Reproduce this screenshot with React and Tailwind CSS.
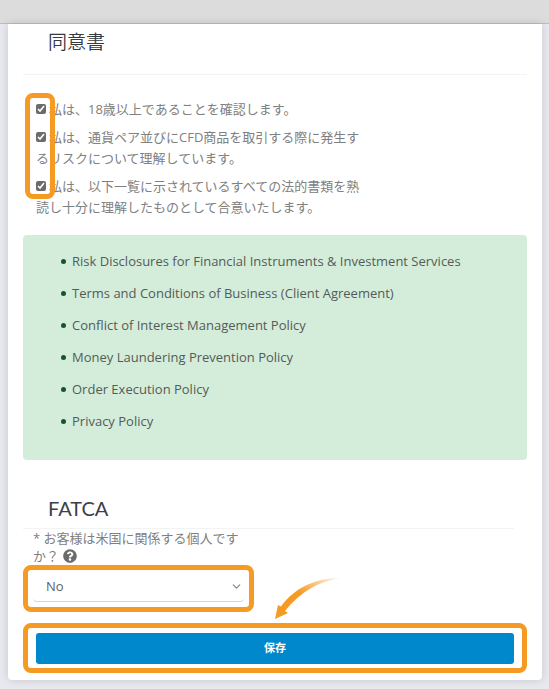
import React, { useState } from "react";
import { FaQuestionCircle } from "react-icons/fa";
import { FiChevronDown } from "react-icons/fi";

const agreements = [
  { id: "age", text: "私は、18歳以上であることを確認します。" },
  {
    id: "risk",
    text: "私は、通貨ペア並びにCFD商品を取引する際に発生するリスクについて理解しています。",
  },
  {
    id: "legal",
    text: "私は、以下一覧に示されているすべての法的書類を熟読し十分に理解したものとして合意いたします。",
  },
];

const documents = [
  "Risk Disclosures for Financial Instruments & Investment Services",
  "Terms and Conditions of Business (Client Agreement)",
  "Conflict of Interest Management Policy",
  "Money Laundering Prevention Policy",
  "Order Execution Policy",
  "Privacy Policy",
];

function Arrow() {
  return (
    <svg
      className="absolute bottom-[49px] left-1/2 h-[41px] w-[67px] pointer-events-none"
      viewBox="0 0 67 41"
      aria-hidden="true"
    >
      <defs>
        <linearGradient id="arrowFade" x1="0" y1="1" x2="1" y2="0">
          <stop offset="0.5" stopColor="#f59a23" />
          <stop offset="1" stopColor="#f59a23" stopOpacity="0.1" />
        </linearGradient>
      </defs>
      <path
        d="M0 41 L3 27 L6 28.5 C19 11 38 0 66 0 C44 3 25 14 10 33 L13 35 Z"
        fill="url(#arrowFade)"
      />
    </svg>
  );
}

export default function App() {
  const [checked, setChecked] = useState({ age: true, risk: true, legal: true });
  const [related, setRelated] = useState("No");

  const toggle = (id) => setChecked({ ...checked, [id]: !checked[id] });

  return (
    <div className="min-h-screen bg-[#e8e9ee] border-r border-b border-[#d2d3d7] text-[13px] text-[#808080] font-['Open_Sans','Noto_Sans_CJK_JP',sans-serif]">
      <div className="h-6 bg-[#dcdcdc] border-b border-[#bdbdbd]" />

      <main className="ml-2 mr-[7px] px-[15px] pb-[7px] bg-white rounded-b shadow-[0_0_8px_rgba(0,0,0,0.15)]">
        <h2 className="pl-[25px] pt-[3px] h-[51px] leading-[30px] text-[19px] font-[350] text-[#343a40] border-b border-[#f3f3f3]">
          同意書
        </h2>

        <div className="relative mt-6 pl-[13px]">
          <ul className="flex flex-col gap-[7px] max-w-[326px]">
            {agreements.map((item) => (
              <li key={item.id} className="leading-[21px]">
                <input
                  id={item.id}
                  type="checkbox"
                  checked={checked[item.id]}
                  onChange={() => toggle(item.id)}
                  className="size-[10px] mr-[3px] accent-[#6b6b6b]"
                />
                <label htmlFor={item.id}>{item.text}</label>
              </li>
            ))}
          </ul>
          {/* Highlight over the tick boxes */}
          <div className="absolute -top-[6px] left-[2px] h-[106px] w-[30px] rounded-lg border-5 border-[#f59a23] pointer-events-none" />
        </div>

        <div className="mt-[17px] pt-[10px] pb-[23px] pl-[38px] pr-4 rounded bg-[#d4edda]">
          <ul className="text-[#545b57]">
            {documents.map((doc) => (
              <li
                key={doc}
                className="flex items-center gap-[6px] leading-8 before:size-[5px] before:shrink-0 before:rounded-full before:bg-[#155724]"
              >
                {doc}
              </li>
            ))}
          </ul>
        </div>

        <h2 className="mt-7 mr-[13px] pl-[25px] h-[41px] leading-10 text-[20px] text-[#3b3f4a] font-[Lato,sans-serif] border-b border-[#f3f3f3]">
          FATCA
        </h2>

        <label htmlFor="fatca" className="block ml-[10px] max-w-[212px] leading-[18px]">
          * お客様は米国に関係する個人ですか？
          <FaQuestionCircle className="inline size-[14px] ml-1 align-[-2px] text-[#6b6b6b]" />
        </label>
        <div className="relative w-[231px] h-[47px] px-[5px] pb-[5px] rounded-lg border-5 border-[#f59a23]">
          <select
            id="fatca"
            value={related}
            onChange={(e) => setRelated(e.target.value)}
            className="appearance-none w-full h-8 pt-[2px] pl-[13px] rounded-b border-b border-[#d5d5d5] bg-transparent text-[#5c6166]"
          >
            <option>No</option>
            <option>Yes</option>
          </select>
          <FiChevronDown
            strokeWidth={2}
            className="absolute right-[6px] top-[10px] size-[13px] pointer-events-none"
          />
        </div>

        <div className="relative mt-[11px] px-2 pt-[5px] pb-1 rounded-lg border-5 border-[#f59a23]">
          <button
            type="button"
            className="block w-full h-[31px] rounded-[3px] bg-[#0088cc] text-[11px] font-bold text-white"
          >
            保存
          </button>
          <Arrow />
        </div>
      </main>
      <div className="h-[9px]" />
    </div>
  );
}
